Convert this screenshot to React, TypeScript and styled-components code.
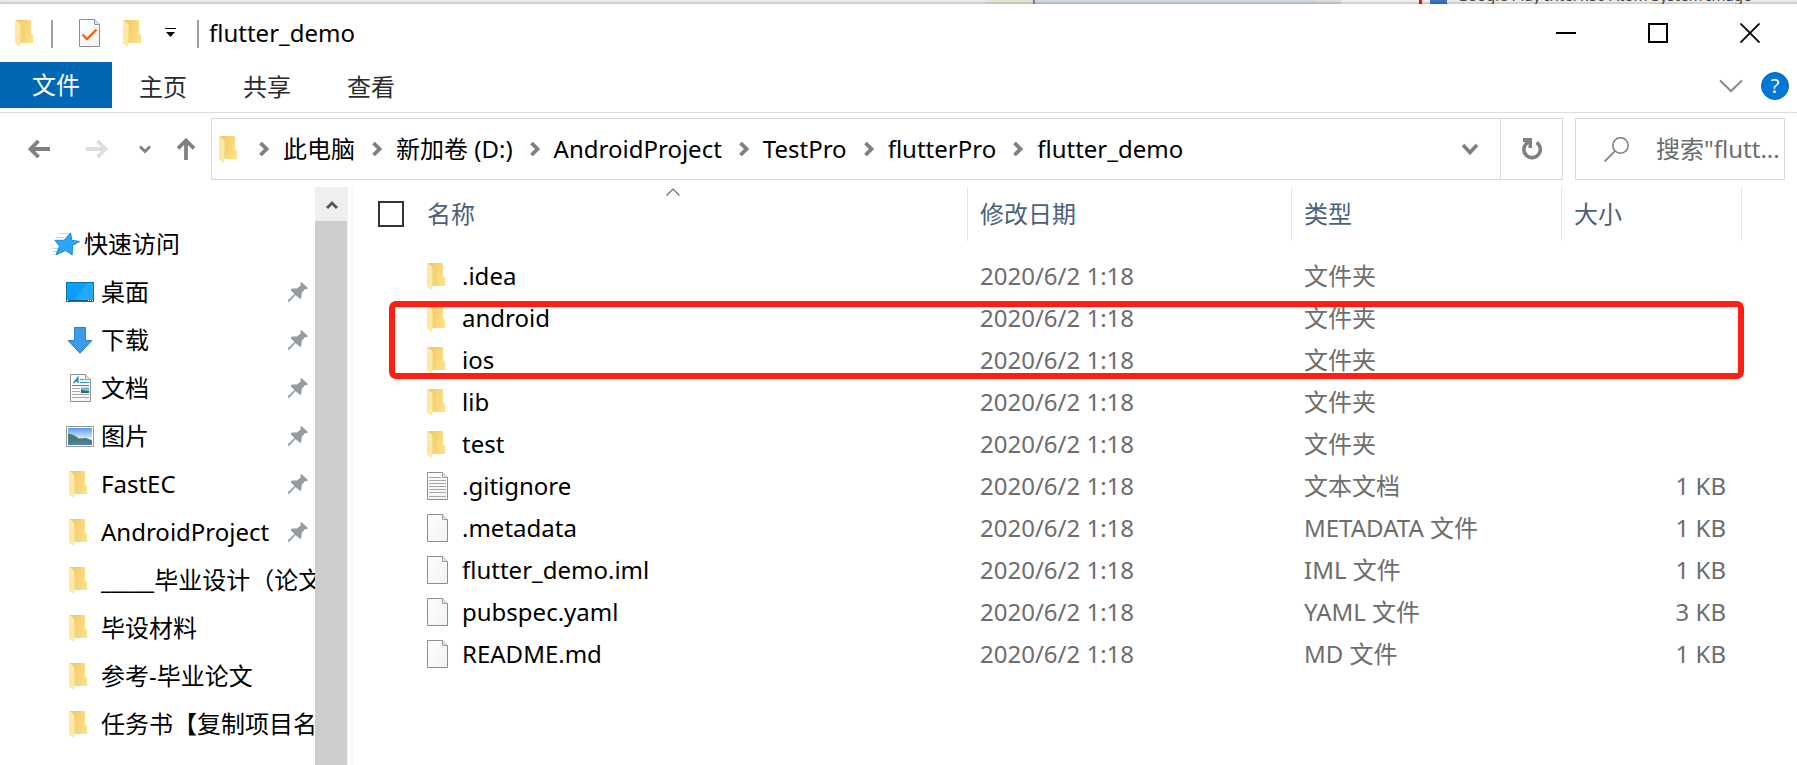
import React, { useId } from 'react';
import styled, { createGlobalStyle } from 'styled-components';

const GlobalStyle = createGlobalStyle`
  *, *::before, *::after { box-sizing: border-box; }
  body {
    margin: 0;
    background: #fff;
    color: #000;
    font: 24px/32px 'Noto Sans', 'Noto Sans CJK SC', sans-serif;
  }
  svg { display: block; flex: none; }
`;

const Window = styled.div`
  display: flex;
  flex-direction: column;
  min-height: 100vh;
  overflow: hidden;
`;

const PlainButton = styled.button`
  display: flex;
  align-items: center;
  justify-content: center;
  flex: none;
  margin: 0;
  padding: 0;
  border: 0;
  background: none;
  color: inherit;
  font: inherit;
`;

/* ---------- strip of the window behind ---------- */

const Backdrop = styled.div`
  display: flex;
  flex: none;
  height: 4px;
  overflow: hidden;
  background: #ebebeb;
  box-shadow: inset 0 -2px 1px #cfcfcf;
`;

const BackdropPart = styled.span<{ $width: number; $color: string }>`
  flex: none;
  width: ${(p) => p.$width}px;
  background: ${(p) => p.$color};
  box-shadow: inset 0 -2px 1px rgba(0, 0, 0, 0.14);
`;

const BackdropFill = styled.span`
  flex: 1;
`;

const BackdropText = styled.span`
  display: flex;
  align-items: flex-end;
  flex: none;
  width: 350px;
  height: 4px;
  padding-left: 10px;
  color: #444;
  font-size: 15px;
  line-height: 24px;
  white-space: nowrap;

  span { margin-bottom: -3px; }
`;

/* ---------- title bar ---------- */

const TitleBar = styled.header`
  display: flex;
  align-items: center;
  flex: none;
  height: 58px;
  padding: 0 1px 0 15px;
`;

const QuickTools = styled.div`
  display: flex;
  align-items: center;
  flex: none;
`;

const Tool = styled(PlainButton)<{ $gap: number }>`
  margin-left: ${(p) => p.$gap}px;
`;

const Divider = styled.span<{ $gap: number }>`
  width: 2px;
  height: 28px;
  margin: 2px 0 0 ${(p) => p.$gap}px;
  background: #a0a0a0;
`;

const Title = styled.h1`
  flex: 1;
  margin: 0 0 0 10px;
  font-size: 24px;
  line-height: 32px;
  font-weight: 400;
`;

const CaptionButton = styled(PlainButton)`
  width: 92px;
  height: 58px;
`;

/* ---------- ribbon tabs ---------- */

const Ribbon = styled.div`
  display: flex;
  flex: none;
  height: 51px;
  padding-right: 8px;
  border-bottom: 1px solid #dadbdc;
`;

const RibbonTab = styled(PlainButton)`
  width: 104px;
  height: 50px;
  padding-right: 2px;
  color: #2b2b2b;
`;

const FileTab = styled(PlainButton)`
  width: 112px;
  height: 46px;
  background: #0067b5;
  color: #fff;
`;

const RibbonTools = styled.div`
  display: flex;
  align-items: center;
  gap: 17px;
  height: 48px;
  margin-left: auto;
`;

const HelpButton = styled(PlainButton)`
  width: 28px;
  height: 28px;
  border: 1px solid #0a66b7;
  border-radius: 50%;
  background: #0078d7;
  color: #fff;
  font-size: 20px;
  line-height: 24px;
`;

/* ---------- navigation row ---------- */

const NavRow = styled.div`
  display: flex;
  flex: none;
  gap: 12px;
  padding: 5px 12px 7px 0;
`;

const NavButtons = styled.div`
  display: flex;
  align-items: center;
  flex: none;
  width: 199px;
  padding-left: 28px;
`;

const AddressBar = styled.div`
  display: flex;
  align-items: center;
  flex: 1;
  min-width: 0;
  height: 62px;
  padding-left: 7px;
  border: 1px solid #d9d9d9;
`;

const Crumbs = styled.ol`
  display: flex;
  align-items: center;
  flex: 1;
  min-width: 0;
  margin: 0 0 0 4px;
  padding: 0;
  list-style: none;
`;

const Crumb = styled.li`
  display: flex;
  align-items: center;
  white-space: nowrap;

  svg { margin: 0 14px 0 17px; }
  a { color: #000; text-decoration: none; }
`;

const AddressDrop = styled(PlainButton)`
  width: 60px;
  height: 60px;
`;

const Refresh = styled(PlainButton)`
  width: 62px;
  height: 60px;
  border-left: 1px solid #d9d9d9;
`;

const SearchBox = styled.label`
  display: flex;
  align-items: center;
  flex: none;
  gap: 27px;
  width: 210px;
  height: 62px;
  padding-left: 28px;
  border: 1px solid #d9d9d9;
`;

const SearchInput = styled.input`
  flex: 1;
  min-width: 0;
  height: 32px;
  padding: 0;
  border: 0;
  outline: 0;
  background: none;
  font: inherit;

  &::placeholder { color: #6d6d6d; opacity: 1; }
`;

/* ---------- body ---------- */

const Body = styled.div`
  display: flex;
  flex: 1;
`;

const Sidebar = styled.nav`
  flex: none;
  width: 315px;
  padding-top: 33px;
  overflow: hidden;
`;

const SideList = styled.ul`
  margin: 0;
  padding: 0;
  list-style: none;
`;

const SideLink = styled.a<{ $root?: boolean }>`
  display: flex;
  align-items: center;
  gap: ${(p) => (p.$root ? 4 : 7)}px;
  height: 48px;
  padding: 0 7px 0 ${(p) => (p.$root ? 50 : 66)}px;
  color: #000;
  text-decoration: none;
  white-space: nowrap;
`;

const SideIcon = styled.span<{ $left?: boolean }>`
  display: flex;
  flex: none;
  width: 28px;
  padding-left: ${(p) => (p.$left ? 3 : 0)}px;
  justify-content: ${(p) => (p.$left ? 'flex-start' : 'center')};
`;

const SideText = styled.span`
  flex: 1;
`;

const ScrollBar = styled.div`
  display: flex;
  flex-direction: column;
  flex: none;
  width: 33px;
  background: #efefef;
`;

const ScrollUp = styled(PlainButton)`
  height: 34px;
  padding-top: 2px;
`;

const ScrollThumb = styled.div`
  flex: 1;
  margin-right: 1px;
  background: #cdcdcd;
`;

const Files = styled.main`
  position: relative;
  flex: 1;
  min-width: 0;
  margin-left: 3px;
  padding-right: 55px;
  border-left: 2px solid #f6f6f6;
`;

const FileTable = styled.table`
  width: 100%;
  table-layout: fixed;
  border-collapse: separate;
  border-spacing: 0;
  color: #6d6d6d;
`;

const Col = styled.col<{ $width?: number }>`
  width: ${(p) => (p.$width ? `${p.$width}px` : 'auto')};
`;

const HeadCell = styled.th<{ $first?: boolean; $open?: boolean }>`
  position: relative;
  height: 54px;
  padding: 0 0 0 ${(p) => (p.$first ? 0 : 12)}px;
  border-right: ${(p) => (p.$open ? 0 : 1)}px solid #e5e5e5;
  color: #4c607a;
  font-weight: 400;
  text-align: left;
`;

const SortMark = styled.span`
  position: absolute;
  top: 1px;
  left: 239px;
`;

const CheckBox = styled.input`
  display: block;
  appearance: none;
  width: 26px;
  height: 26px;
  margin: 0 0 0 25px;
  border: 2px solid #333;
  background: #fff;
`;

const Rows = styled.tbody`
  &::before {
    content: '';
    display: block;
    height: 14px;
  }
`;

const Cell = styled.td<{ $right?: boolean }>`
  height: 42px;
  padding: 0 ${(p) => (p.$right ? 16 : 0)}px 0 12px;
  text-align: ${(p) => (p.$right ? 'right' : 'left')};
  white-space: nowrap;
`;

const NameCell = styled(Cell)`
  padding: 0;
  color: #000;
`;

const FileName = styled.span`
  display: flex;
  align-items: center;
  gap: 14px;
`;

const FileIcon = styled.span`
  flex: none;
  width: 21px;
`;

const Highlight = styled.div`
  position: absolute;
  top: 114px;
  left: 36px;
  right: 53px;
  height: 78px;
  border: 6px solid #ff1f12;
  border-radius: 7px;
  pointer-events: none;
`;

/* ---------- drawings ---------- */

const FolderIcon = () => {
  const id = useId();
  return (
    <svg width="19" height="27" viewBox="0 0 19 27" aria-hidden="true">
      <defs>
        <linearGradient id={id} x1="0" x2="1" y1="0" y2="0.3">
          <stop offset="0.2" stopColor="#efcb68" />
          <stop offset="1" stopColor="#fddf86" />
        </linearGradient>
      </defs>
      <path d="M0 0H16V13L18 15V22.500L19 23H5V4Z" fill={`url(#${id})`} />
      <path d="M0 .5L5.500 4.500V25L4.500 26.800L0 23.500Z" fill="#ffe8a3" />
    </svg>
  );
};

const Page = ({ children }: { children?: React.ReactNode }) => {
  const id = useId();
  return (
    <svg width="21" height="28" viewBox="0 0 21 28" aria-hidden="true">
      <defs>
        <linearGradient id={id} x1="0" x2="1" y1="0" y2="1">
          <stop offset="0" stopColor="#fff" />
          <stop offset="1" stopColor="#f0f2f4" />
        </linearGradient>
      </defs>
      <path d="M.5 .5H15.500L20.500 5.500V27.500H.5Z" fill={`url(#${id})`} stroke="#8e8e8e" />
      <path d="M15.500 .5V5.500H20.500" fill="#e6e6e6" stroke="#9a9a9a" />
      {children}
    </svg>
  );
};

const TextPage = () => (
  <Page>
    <path d="M2 5.500H14M2 8.500H19M2 11.500H19M2 14.500H19M2 17.500H19M2 20.500H19M2 24.500H19" stroke="#a6a6a6" />
  </Page>
);

const CheckPage = () => (
  <Page>
    <path d="M3.500 15.500L8 20L17.500 10.500" fill="none" stroke="#f7630c" strokeWidth="2.400" />
  </Page>
);

const DocumentIcon = () => (
  <Page>
    <path d="M3.500 9L8 3.500V9M5 7H8" fill="none" stroke="#1b87c9" strokeWidth="1.300" />
    <path d="M10 5.500H14M10 8.500H19M2 11.500H19" stroke="#2b95d6" />
    <path d="M2 14.500H10M2 17.500H10M2 20.500H19M2 23.500H19" stroke="#a9a9a9" />
    <rect x="11" y="13.500" width="8" height="5.500" fill="#7ab4ea" />
    <path d="M11 15.500L15 17L19 17V19H11Z" fill="#2f6a67" />
  </Page>
);

const StarIcon = () => (
  <svg width="30" height="24" viewBox="0 0 30 24" aria-hidden="true">
    <path d="M9 1.500H19M6 5.500H14M5 16.500H9M3 19.500H8" stroke="#a9d9f7" />
    <path d="M0 16.500H5M1 22.500H6" stroke="#dceffb" />
    <path
      d="M20.500 .8L21.800 8.300L29.500 9.500L22.500 13.500L22.200 22.800L15.500 18.500L6 22.800L9.500 14.200L5 8.300L14.200 8.300Z"
      fill="#2aa7fb"
      stroke="#1a86cf"
    />
  </svg>
);

const DesktopIcon = () => (
  <svg width="28" height="20" viewBox="0 0 28 20" aria-hidden="true">
    <rect x=".5" y=".5" width="27" height="19" fill="#0f9dfc" stroke="#0a73b8" />
    <path d="M9 18L21 1H27V18Z" fill="#35b0ff" opacity=".55" />
    <path d="M1 18.500H27" stroke="#0b5c96" />
    <path d="M1 18.500H2M22 18.500H23M24 18.500H25M26 18.500H27" stroke="#fff" />
  </svg>
);

const DownloadIcon = () => (
  <svg width="26" height="27" viewBox="0 0 26 27" aria-hidden="true">
    <path d="M7.500 .5H18.500V13.500H25L13 26.200L1 13.500H7.500Z" fill="#3c9ae8" stroke="#2d80cb" />
  </svg>
);

const PictureIcon = () => {
  const id = useId();
  return (
    <svg width="28" height="21" viewBox="0 0 28 21" aria-hidden="true">
      <defs>
        <linearGradient id={id} x1="0" x2="0" y1="0" y2="1">
          <stop offset="0" stopColor="#5d9bf5" />
          <stop offset=".6" stopColor="#d4ecfb" />
        </linearGradient>
      </defs>
      <rect x=".5" y=".5" width="27" height="20" fill="#fff" stroke="#9b9b9b" />
      <rect x="2" y="2" width="24" height="17" fill={`url(#${id})`} />
      <path d="M2 8C5 7 9 10 13 12.500L20 12L26 14.500V16H2Z" fill="#4c7d69" />
      <path d="M2 15.500H26V19H2Z" fill="#4a7db3" />
    </svg>
  );
};

const PinIcon = () => (
  <svg width="20" height="20" viewBox="0 0 20 20" aria-hidden="true">
    <path
      d="M13.500 0L20 6L18.500 7.500L17 7L13.500 11L13.500 15.500L12 17L7.500 13L1.500 19.500L0 20V18L6.500 12L2.500 8L4 6.500L9 6.500L13 3L12 1.500Z"
      fill="#939ca3"
    />
  </svg>
);

const CrumbArrow = () => (
  <svg width="10" height="16" viewBox="0 0 10 16" aria-hidden="true">
    <path d="M1.500 2L7.500 8L1.500 14" fill="none" stroke="#808080" strokeWidth="3.800" />
  </svg>
);

const Arrow = ({ back, color }: { back?: boolean; color: string }) => (
  <svg width="22" height="18" viewBox="0 0 22 18" aria-hidden="true">
    <path
      d={back ? 'M22 9H2M10.500 1L2.500 9L10.500 17' : 'M0 9H20M11.500 1L19.500 9L11.500 17'}
      fill="none"
      stroke={color}
      strokeWidth="3.800"
    />
  </svg>
);

const UpArrow = () => (
  <svg width="18" height="22" viewBox="0 0 18 22" aria-hidden="true">
    <path d="M9 22V2M1 10.500L9 2.500L17 10.500" fill="none" stroke="#808080" strokeWidth="3.800" />
  </svg>
);

/* ---------- data ---------- */

const crumbs = ['此电脑', '新加卷 (D:)', 'AndroidProject', 'TestPro', 'flutterPro', 'flutter_demo'];

type Place = { name: string; icon: React.ReactNode; folder?: boolean; pinned?: boolean };

const places: Place[] = [
  { name: '桌面', icon: <DesktopIcon />, pinned: true },
  { name: '下载', icon: <DownloadIcon />, pinned: true },
  { name: '文档', icon: <DocumentIcon />, pinned: true },
  { name: '图片', icon: <PictureIcon />, pinned: true },
  { name: 'FastEC', icon: <FolderIcon />, folder: true, pinned: true },
  { name: 'AndroidProject', icon: <FolderIcon />, folder: true, pinned: true },
  { name: '_____毕业设计（论文', icon: <FolderIcon />, folder: true },
  { name: '毕设材料', icon: <FolderIcon />, folder: true },
  { name: '参考-毕业论文', icon: <FolderIcon />, folder: true },
  { name: '任务书【复制项目名', icon: <FolderIcon />, folder: true },
];

type Entry = { name: string; type: string; size?: string; icon: React.ReactNode };

const entries: Entry[] = [
  { name: '.idea', type: '文件夹', icon: <FolderIcon /> },
  { name: 'android', type: '文件夹', icon: <FolderIcon /> },
  { name: 'ios', type: '文件夹', icon: <FolderIcon /> },
  { name: 'lib', type: '文件夹', icon: <FolderIcon /> },
  { name: 'test', type: '文件夹', icon: <FolderIcon /> },
  { name: '.gitignore', type: '文本文档', size: '1 KB', icon: <TextPage /> },
  { name: '.metadata', type: 'METADATA 文件', size: '1 KB', icon: <Page /> },
  { name: 'flutter_demo.iml', type: 'IML 文件', size: '1 KB', icon: <Page /> },
  { name: 'pubspec.yaml', type: 'YAML 文件', size: '3 KB', icon: <Page /> },
  { name: 'README.md', type: 'MD 文件', size: '1 KB', icon: <Page /> },
];

export default function App() {
  return (
    <Window>
      <GlobalStyle />
      <Backdrop aria-hidden="true">
        <BackdropFill />
        <BackdropPart $width={48} $color="#e6e2d4" />
        <BackdropPart $width={2} $color="#7d858f" />
        <BackdropPart $width={282} $color="#d2d8e0" />
        <BackdropPart $width={24} $color="#dcdcdc" />
        <BackdropPart $width={78} $color="#f0f0f0" />
        <BackdropPart $width={3} $color="#f01010" />
        <BackdropPart $width={8} $color="#f0f0f0" />
        <BackdropPart $width={17} $color="#3b76c4" />
        <BackdropText>
          <span>Google Play Intel x86 Atom System Image</span>
        </BackdropText>
      </Backdrop>

      <TitleBar>
        <QuickTools>
          <FolderIcon />
          <Divider $gap={17} />
          <Tool $gap={26} aria-label="属性">
            <CheckPage />
          </Tool>
          <Tool $gap={23} aria-label="新建文件夹">
            <FolderIcon />
          </Tool>
          <Tool $gap={23} aria-label="自定义快速访问工具栏">
            <svg width="11" height="10" viewBox="0 0 11 10" aria-hidden="true">
              <path d="M0 .5H11" stroke="#000" />
              <path d="M1 4H10L5.500 9Z" />
            </svg>
          </Tool>
          <Divider $gap={21} />
        </QuickTools>
        <Title>flutter_demo</Title>
        <CaptionButton aria-label="最小化">
          <svg width="20" height="20" viewBox="0 0 20 20" aria-hidden="true">
            <path d="M0 10H20" stroke="#000" strokeWidth="2" />
          </svg>
        </CaptionButton>
        <CaptionButton aria-label="最大化">
          <svg width="20" height="20" viewBox="0 0 20 20" aria-hidden="true">
            <rect x="1" y="1" width="18" height="18" fill="none" stroke="#000" strokeWidth="2" />
          </svg>
        </CaptionButton>
        <CaptionButton aria-label="关闭">
          <svg width="20" height="20" viewBox="0 0 20 20" aria-hidden="true">
            <path d="M.5 .5L19.500 19.500M19.500 .5L.5 19.500" stroke="#000" strokeWidth="1.800" />
          </svg>
        </CaptionButton>
      </TitleBar>

      <Ribbon>
        <FileTab>文件</FileTab>
        <RibbonTab>主页</RibbonTab>
        <RibbonTab>共享</RibbonTab>
        <RibbonTab>查看</RibbonTab>
        <RibbonTools>
          <PlainButton aria-label="展开功能区">
            <svg width="26" height="14" viewBox="0 0 26 14" aria-hidden="true">
              <path d="M2 1.500L13 12L24 1.500" fill="none" stroke="#8a8a8a" strokeWidth="2" />
            </svg>
          </PlainButton>
          <HelpButton aria-label="帮助">?</HelpButton>
        </RibbonTools>
      </Ribbon>

      <NavRow>
        <NavButtons>
          <Tool $gap={0} aria-label="后退">
            <Arrow back color="#808080" />
          </Tool>
          <Tool $gap={36} aria-label="前进">
            <Arrow color="#dedede" />
          </Tool>
          <Tool $gap={31} aria-label="最近浏览的位置">
            <svg width="12" height="9" viewBox="0 0 12 9" aria-hidden="true">
              <path d="M1 1.500L6 6.500L11 1.500" fill="none" stroke="#808080" strokeWidth="3" />
            </svg>
          </Tool>
          <Tool $gap={26} aria-label="上移">
            <UpArrow />
          </Tool>
        </NavButtons>
        <AddressBar>
          <FolderIcon />
          <Crumbs>
            {crumbs.map((name) => (
              <Crumb key={name}>
                <CrumbArrow />
                <a href="#">{name}</a>
              </Crumb>
            ))}
          </Crumbs>
          <AddressDrop aria-label="以前的位置">
            <svg width="18" height="13" viewBox="0 0 18 13" aria-hidden="true">
              <path d="M2 2L9 9.500L16 2" fill="none" stroke="#808080" strokeWidth="3.600" />
            </svg>
          </AddressDrop>
          <Refresh aria-label="刷新">
            <svg width="20" height="22" viewBox="0 0 20 22" aria-hidden="true">
              <path d="M14.500 4.600A8.200 8.200 0 1 1 4 6L7.500 3" fill="none" stroke="#808080" strokeWidth="3.600" />
              <path d="M1 0H10V10H6.500V4H1Z" fill="#808080" />
            </svg>
          </Refresh>
        </AddressBar>
        <SearchBox>
          <svg width="25" height="25" viewBox="0 0 25 25" aria-hidden="true">
            <circle cx="16.500" cy="8.500" r="7.700" fill="none" stroke="#7c7c7c" strokeWidth="1.500" />
            <path d="M11 14L.7 24.300" stroke="#7c7c7c" strokeWidth="1.700" />
          </svg>
          <SearchInput type="text" aria-label="搜索" placeholder={'搜索"flutt...'} />
        </SearchBox>
      </NavRow>

      <Body>
        <Sidebar>
          <SideList>
            <li>
              <SideLink $root href="#">
                <StarIcon />
                <SideText>快速访问</SideText>
              </SideLink>
            </li>
            {places.map((place) => (
              <li key={place.name}>
                <SideLink href="#">
                  <SideIcon $left={place.folder}>{place.icon}</SideIcon>
                  <SideText>{place.name}</SideText>
                  {place.pinned && <PinIcon />}
                </SideLink>
              </li>
            ))}
          </SideList>
        </Sidebar>
        <ScrollBar>
          <ScrollUp aria-label="向上滚动">
            <svg width="12" height="10" viewBox="0 0 12 10" aria-hidden="true">
              <path d="M1 8L6 3L11 8" fill="none" stroke="#555" strokeWidth="3" />
            </svg>
          </ScrollUp>
          <ScrollThumb />
        </ScrollBar>
        <Files>
          <FileTable>
            <colgroup>
              <Col $width={74} />
              <Col />
              <Col $width={324} />
              <Col $width={270} />
              <Col $width={180} />
            </colgroup>
            <thead>
              <tr>
                <HeadCell $first $open>
                  <CheckBox type="checkbox" aria-label="全选" />
                </HeadCell>
                <HeadCell $first>
                  名称
                  <SortMark>
                    <svg width="14" height="8" viewBox="0 0 14 8" aria-hidden="true">
                      <path d="M.5 7.500L7 1L13.500 7.500" fill="none" stroke="#6a6a6a" strokeWidth="1.200" />
                    </svg>
                  </SortMark>
                </HeadCell>
                <HeadCell>修改日期</HeadCell>
                <HeadCell>类型</HeadCell>
                <HeadCell>大小</HeadCell>
              </tr>
            </thead>
            <Rows>
              {entries.map((entry) => (
                <tr key={entry.name}>
                  <Cell />
                  <NameCell>
                    <FileName>
                      <FileIcon>{entry.icon}</FileIcon>
                      {entry.name}
                    </FileName>
                  </NameCell>
                  <Cell>2020/6/2 1:18</Cell>
                  <Cell>{entry.type}</Cell>
                  <Cell $right>{entry.size}</Cell>
                </tr>
              ))}
            </Rows>
          </FileTable>
          <Highlight />
        </Files>
      </Body>
    </Window>
  );
}
